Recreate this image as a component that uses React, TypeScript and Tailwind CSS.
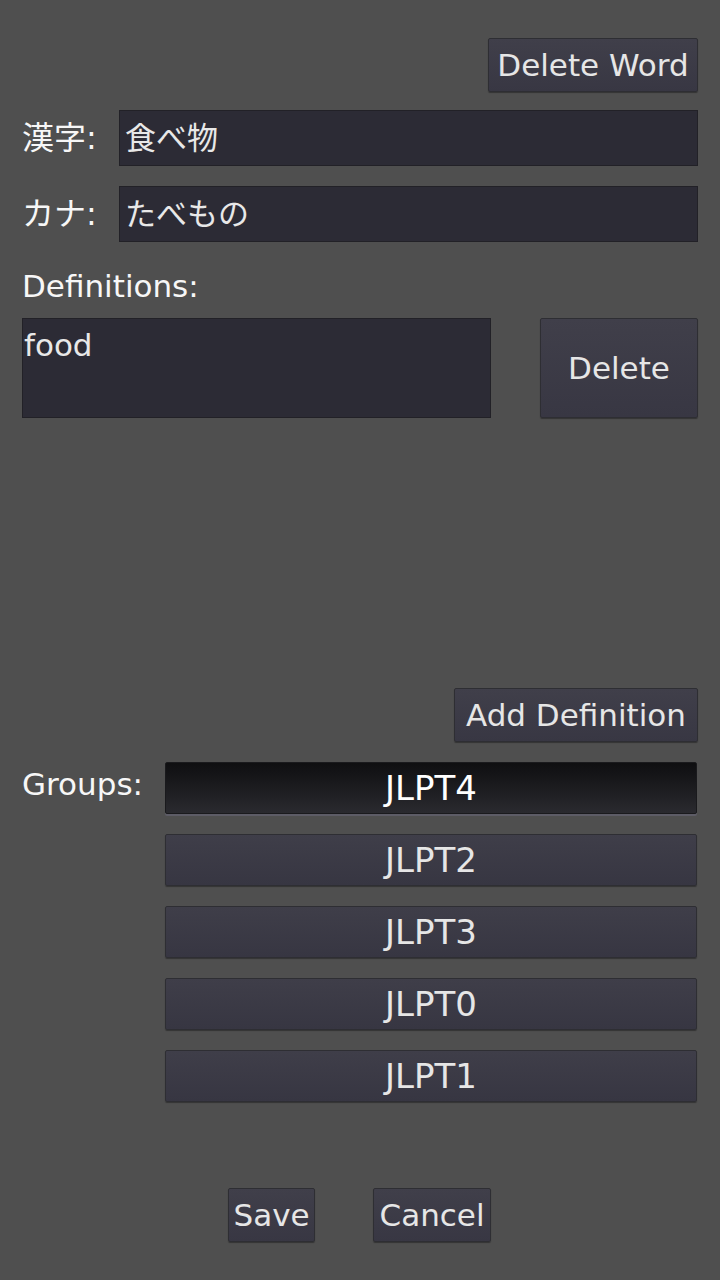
import React from "react";

const font = { fontFamily: '"DejaVu Sans", "Noto Sans CJK JP", sans-serif' };

function Btn({ children, className = "" }: { children: React.ReactNode; className?: string }) {
  return (
    <div
      className={
        "flex items-center justify-center rounded-[2px] border border-[#2e2e33] bg-gradient-to-b from-[#403f4a] to-[#383743] text-[#e6e6e6] shadow-[0_1px_1px_rgba(0,0,0,0.35)] " +
        className
      }
    >
      {children}
    </div>
  );
}

function GroupBtn({ label, active }: { label: string; active?: boolean }) {
  return (
    <div
      className={
        "flex h-[52px] items-center justify-center rounded-[2px] border text-[34px] " +
        (active
          ? "border-[#1a1a1d] bg-gradient-to-b from-[#0f0f11] to-[#2a2a2f] text-white shadow-[0_2px_0_#5d5c66]"
          : "border-[#2e2e33] bg-gradient-to-b from-[#3f3e49] to-[#373642] text-[#e6e6e6] shadow-[0_1px_1px_rgba(0,0,0,0.35)]")
      }
    >
      {label}
    </div>
  );
}

export default function App() {
  return (
    <div style={font} className="flex h-[1280px] w-[720px] flex-col bg-[#4f4f4f] text-[#f7f7f7]">
      <div className="flex justify-end pr-[22px] pt-[38px]">
        <Btn className="h-[54px] w-[210px] text-[31px]">Delete Word</Btn>
      </div>

      <div className="mt-[18px] flex items-center pr-[22px]">
        <div className="w-[119px] pl-[22px] text-[32px] leading-none">漢字:</div>
        <div className="flex h-[56px] flex-1 items-center border border-[#222127] bg-[#2c2b35] pl-[5px] text-[31px] text-[#e8e8e8]">
          食べ物
        </div>
      </div>

      <div className="mt-[20px] flex items-center pr-[22px]">
        <div className="w-[119px] pl-[22px] text-[32px] leading-none">カナ:</div>
        <div className="flex h-[56px] flex-1 items-center border border-[#222127] bg-[#2c2b35] pl-[5px] text-[31px] text-[#e8e8e8]">
          たべもの
        </div>
      </div>

      <div className="mt-[24px] pl-[22px] text-[31px] leading-[40px]">Definitions:</div>

      <div className="mt-[12px] flex px-[22px]">
        <div className="h-[100px] w-[469px] border border-[#222127] bg-[#2c2b35] pl-[1px] text-[31px] leading-[52px] text-[#e8e8e8]">
          food
        </div>
        <div className="flex-1" />
        <Btn className="h-[100px] w-[158px] text-[31px]">Delete</Btn>
      </div>

      <div className="mt-[270px] flex justify-end pr-[22px]">
        <Btn className="h-[54px] w-[244px] text-[31px]">Add Definition</Btn>
      </div>

      <div className="mt-[20px] flex pr-[23px]">
        <div className="w-[165px] pl-[22px] text-[31px] leading-[44px]">Groups:</div>
        <div className="flex flex-1 flex-col gap-[20px]">
          <GroupBtn label="JLPT4" active />
          <GroupBtn label="JLPT2" />
          <GroupBtn label="JLPT3" />
          <GroupBtn label="JLPT0" />
          <GroupBtn label="JLPT1" />
        </div>
      </div>

      <div className="mt-[86px] flex">
        <div className="ml-[228px]">
          <Btn className="h-[54px] w-[87px] text-[31px]">Save</Btn>
        </div>
        <div className="ml-[58px]">
          <Btn className="h-[54px] w-[118px] text-[31px]">Cancel</Btn>
        </div>
      </div>
    </div>
  );
}
